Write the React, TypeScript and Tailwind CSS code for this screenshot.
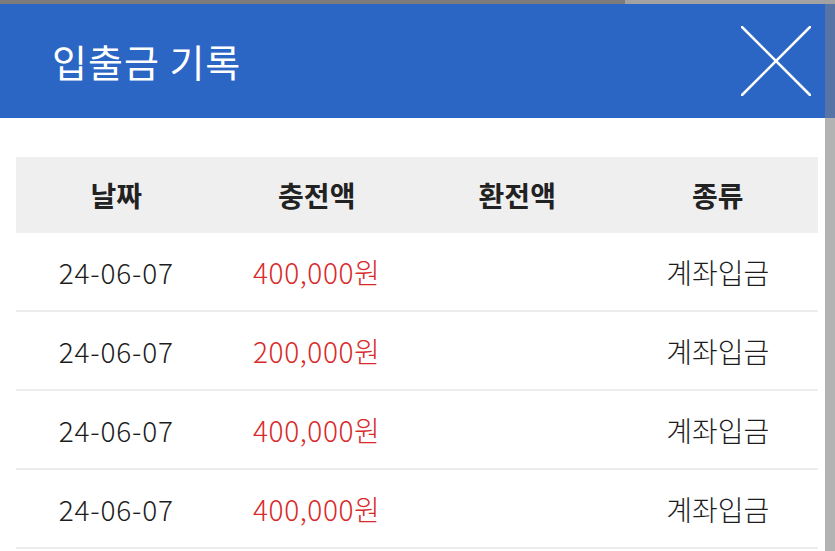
import React from 'react'

interface RecordType {
  date: string;
  charge: string;
  exchange: string;
  kind: string;
}

const records: RecordType[] = [
  { date: '24-06-07', charge: '400,000원', exchange: '', kind: '계좌입금' },
  { date: '24-06-07', charge: '200,000원', exchange: '', kind: '계좌입금' },
  { date: '24-06-07', charge: '400,000원', exchange: '', kind: '계좌입금' },
  { date: '24-06-07', charge: '400,000원', exchange: '', kind: '계좌입금' },
]

const font = { fontFamily: '"Noto Sans CJK KR", "Noto Sans", sans-serif' }

const App = () => {
  return (
    <div className="w-[835px] h-[551px] overflow-hidden bg-white flex flex-col" style={font}>
      {/* top edge */}
      <div className="flex h-[4px] shrink-0">
        <div className="w-[625px] bg-[#7c7c7c]" />
        <div className="flex-1 bg-[#a2a2a2]" />
      </div>

      <div className="flex flex-1">
        <div className="flex-1 flex flex-col">
          <div className="h-[114px] bg-[#2b66c5] flex items-center justify-between pl-[52px] pr-[14px]">
            <div className="text-white text-[38px] leading-none tracking-[1px]">입출금 기록</div>
            <button className="w-[70px] h-[70px]">
              <svg width="70" height="70" viewBox="0 0 70 70">
                <line x1="1" y1="1" x2="69" y2="69" stroke="white" strokeWidth="2.5" strokeLinecap="round" />
                <line x1="69" y1="1" x2="1" y2="69" stroke="white" strokeWidth="2.5" strokeLinecap="round" />
              </svg>
            </button>
          </div>

          <div className="pt-[39px] pl-[16px] pr-[7px]">
            <div className="grid grid-cols-4 h-[76px] bg-[#efefef] items-center text-center text-[28px] font-semibold text-[#222]">
              <div>날짜</div>
              <div>충전액</div>
              <div>환전액</div>
              <div>종류</div>
            </div>
            {records.map((rec, i) => (
              <div
                key={i}
                className="grid grid-cols-4 h-[79px] items-center text-center text-[28px] font-light text-[#1c1c1c] border-b-2 border-[#ececec]"
              >
                <div className="tracking-[0.8px]">{rec.date}</div>
                <div className="text-[#d82a2a] tracking-[0.6px]">{rec.charge}</div>
                <div>{rec.exchange}</div>
                <div>{rec.kind}</div>
              </div>
            ))}
          </div>
        </div>

        {/* right edge */}
        <div className="w-[10px] flex flex-col shrink-0">
          <div className="h-[114px] bg-[#5873a5]" />
          <div className="flex-1 bg-[#b3b3b3]" />
        </div>
      </div>
    </div>
  )
}

export default App
